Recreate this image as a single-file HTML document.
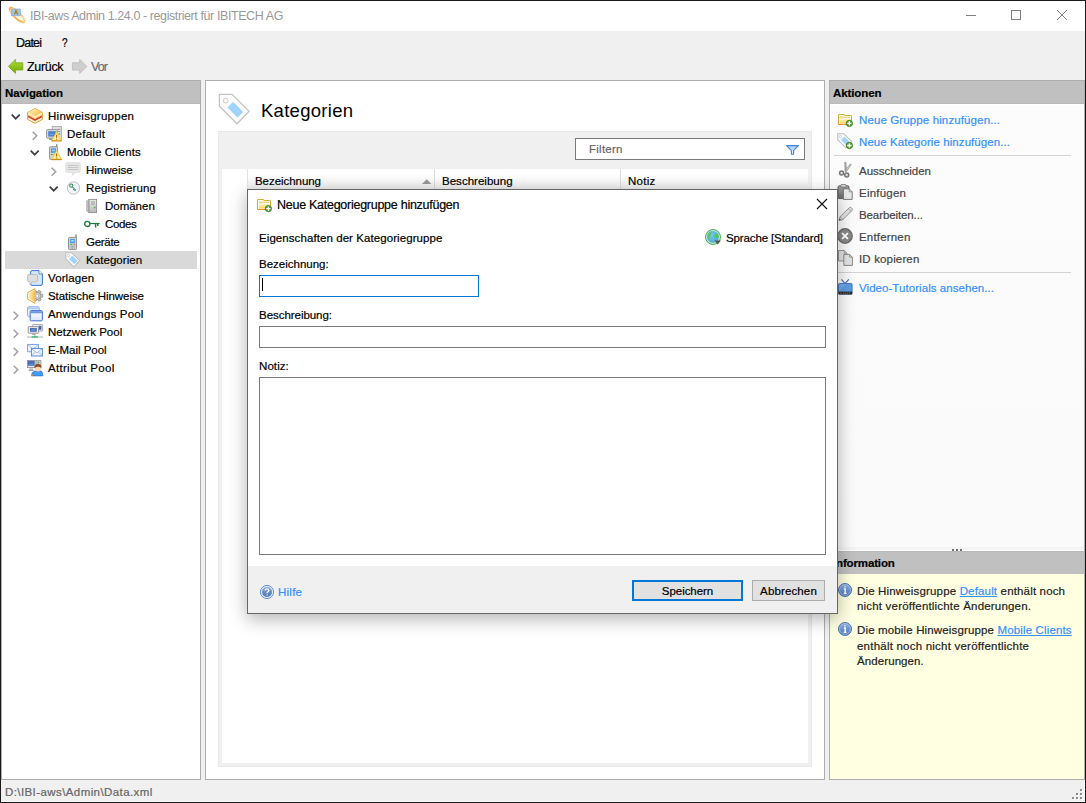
<!DOCTYPE html>
<html lang="de">
<head>
<meta charset="utf-8">
<title>IBI-aws Admin</title>
<style>
*{box-sizing:border-box;margin:0;padding:0}
html,body{width:1086px;height:803px;overflow:hidden}
body{position:relative;background:#f0f0f0;font-family:"Liberation Sans","DejaVu Sans",sans-serif;font-size:11.5px;color:#000;line-height:16px;-webkit-text-stroke:.2px}
.abs{position:absolute}
.t{position:absolute;white-space:nowrap;line-height:16px;height:16px}
svg{position:absolute;overflow:visible}
#frame{position:absolute;left:0;top:0;width:1086px;height:803px;border:1px solid #1a1a1a;pointer-events:none;z-index:50}
#titlebar{left:1px;top:1px;width:1084px;height:30px;background:#fff}
#title{left:29px;top:7px;color:#999;font-size:12.5px;-webkit-text-stroke:0}
.hdr{background:#c0c0c0;font-weight:bold;height:23px;border-bottom:1px solid #b9b9b9}
.hdr.tp{border-bottom:0;border-top:1px solid #b9b9b9}
.hdr span{position:absolute;left:3px;top:4px;line-height:16px;white-space:nowrap}
#nav{left:1px;top:80px;width:200px;height:700px;background:#fff;border:1px solid #adadad}
.row{position:absolute;height:18px;line-height:18px;white-space:nowrap}
#center{left:205px;top:80px;width:620px;height:700px;background:#fff;border:1px solid #adadad}
#right{left:829px;top:80px;width:256px;height:700px;border:1px solid #adadad;background:linear-gradient(#fcfcfc,#fafafa 66%,#fafafa)}

.act{position:absolute;left:29px;white-space:nowrap;line-height:16px;height:16px;color:#444}
.lnk{color:#3390ff}
.sep{position:absolute;left:4px;width:237px;height:1px;background:#d2d2d2}
.inf{position:absolute;left:27px;white-space:nowrap;line-height:16px;height:16px;color:#222}
.inf u{color:#3390ff}
#dialog{left:247px;top:189px;width:591px;height:425px;background:#fff;border:1px solid #666;box-shadow:0 5px 17px rgba(0,0,0,.30);z-index:10}
.inp{position:absolute;background:#fff;border:1px solid #7a7a7a}
.btn{position:absolute;background:#e1e1e1;border:1px solid #adadad;height:21px;text-align:center}
.btn span{position:absolute;left:0;right:0;top:2px;line-height:16px;text-align:center}
/*LS*/
#m1{letter-spacing:-0.797px}
#tb1{letter-spacing:-0.321px}
#tb2{letter-spacing:-0.883px}
#h1{letter-spacing:-0.089px}
#r1{letter-spacing:0.272px}
#r2{letter-spacing:0.260px}
#r3{letter-spacing:0.113px}
#r4{letter-spacing:-0.010px}
#r5{letter-spacing:0.133px}
#r6{letter-spacing:-0.013px}
#r7{letter-spacing:-0.362px}
#r8{letter-spacing:-0.294px}
#r9{letter-spacing:0.064px}
#r10{letter-spacing:0.113px}
#r11{letter-spacing:-0.068px}
#r12{letter-spacing:0.192px}
#r13{letter-spacing:0.005px}
#r14{letter-spacing:-0.021px}
#r15{letter-spacing:0.304px}
#a1{letter-spacing:0.120px}
#a2{letter-spacing:0.075px}
#a3{letter-spacing:-0.023px}
#a4{letter-spacing:0.228px}
#a5{letter-spacing:-0.102px}
#a6{letter-spacing:0.178px}
#a7{letter-spacing:0.149px}
#a8{letter-spacing:0.056px}
#n1{letter-spacing:0.162px}
#n2{letter-spacing:0.189px}
#n3{letter-spacing:0.147px}
#n4{letter-spacing:0.220px}
#n5{letter-spacing:0.092px}
#d0{letter-spacing:-0.265px}
#d1{letter-spacing:0.077px}
#d3{letter-spacing:-0.000px}
#d4{letter-spacing:-0.044px}
#d5{letter-spacing:0.079px}
#d2{letter-spacing:-0.123px}
#c1{letter-spacing:-0.050px}
#c2{letter-spacing:0.025px}
#c3{letter-spacing:0.274px}
#flt{letter-spacing:0.258px}
#title{letter-spacing:-0.409px}
#ct{letter-spacing:0.280px}
#st{letter-spacing:0.412px}
#d6{letter-spacing:0.246px}
#b1{letter-spacing:-0.050px}
#b2{letter-spacing:0.134px}
#h2{letter-spacing:-0.100px}
#h3{letter-spacing:-0.145px}
/*ENDLS*/
</style>
</head>
<body>
<div id="titlebar" class="abs">

  <svg style="left:8px;top:6px" width="16" height="16" viewBox="0 0 16 16">
    <ellipse cx="8" cy="8" rx="10.2" ry="3.2" transform="rotate(45 8 8)" fill="rgba(255,240,214,.55)" stroke="#f4b957" stroke-width="1.5" stroke-dasharray="1.3 .45"/>
    <rect x="2.6" y="2" width="8.8" height="6.8" fill="#9cbfe4" stroke="#7e9fc4" stroke-width=".6" opacity=".92"/>
    <path d="M5.4 7.4 L7 3.4 L8.6 7.4 M6 6 H8" fill="none" stroke="#9a8414" stroke-width="1.1"/>
    <path d="M1.2 3.4 Q-.2 .4 2.6 1 M5.2 9.4 Q9.8 14.2 13.6 14.8" fill="none" stroke="#f1ae45" stroke-width="1.5"/>
  </svg>
  <svg style="left:965px;top:14px" width="10" height="1"><rect width="10" height="1" fill="#808080"/></svg>
  <svg style="left:1010px;top:9px" width="10" height="10"><rect x=".5" y=".5" width="9" height="9" fill="none" stroke="#808080"/></svg>
  <svg style="left:1056px;top:9px" width="10" height="10"><path d="M0 0 L10 10 M10 0 L0 10" stroke="#808080" stroke-width="1" fill="none"/></svg>
  <div id="title" class="t">IBI-aws Admin 1.24.0 - registriert für IBITECH AG</div>
</div>
<div class="t" id="m1" style="left:16px;top:35px;font-size:12.5px">Datei</div>
<div class="t" id="m2" style="left:62px;top:35px;font-size:12.5px;transform:scaleX(.8);transform-origin:0 0">?</div>

<svg style="left:8px;top:59px" width="16" height="16" viewBox="0 0 16 16">
  <defs><linearGradient id="gG" x1="0" y1="0" x2="0" y2="1"><stop offset="0" stop-color="#b9e04a"/><stop offset=".5" stop-color="#8fc31a"/><stop offset="1" stop-color="#74a80c"/></linearGradient></defs>
  <path d="M.4 7.4 L7.4 .4 L7.4 3.8 L14.8 3.8 L14.8 11 L7.4 11 L7.4 14.4 Z" fill="url(#gG)" stroke="#7aa814" stroke-width=".8" stroke-linejoin="round"/>
</svg>
<svg style="left:72px;top:59px" width="16" height="16" viewBox="0 0 16 16">
  <path d="M14.8 7.4 L7.8 .4 L7.8 3.8 L.4 3.8 L.4 11 L7.8 11 L7.8 14.4 Z" fill="#cfcfcf" stroke="#b8b8b8" stroke-width=".8" stroke-linejoin="round"/>
</svg>
<div class="t" id="tb1" style="left:27px;top:59px;font-size:12.5px">Zurück</div>
<div class="t" id="tb2" style="left:91px;top:59px;font-size:12.5px;color:#6d6d6d">Vor</div>

<div id="nav" class="abs">
  <div class="hdr abs" style="left:0;top:0;width:198px"><span id="h1">Navigation</span></div>
  <div class="abs" style="left:3px;top:170px;width:192px;height:18px;background:#d9d9d9"></div>
<!--TREEICONS-->
<svg style="left:9px;top:33px" width="10" height="6" viewBox="0 0 10 6"><path d="M.7 .7 L4.7 4.7 L8.7 .7" fill="none" stroke="#404040" stroke-width="1.7"/></svg>
<svg style="left:30px;top:50px" width="6" height="10" viewBox="0 0 6 10"><path d="M.7 .7 L4.7 4.7 L.7 8.7" fill="none" stroke="#a3a3a3" stroke-width="1.6"/></svg>
<svg style="left:28px;top:69px" width="10" height="6" viewBox="0 0 10 6"><path d="M.7 .7 L4.7 4.7 L8.7 .7" fill="none" stroke="#404040" stroke-width="1.7"/></svg>
<svg style="left:49px;top:86px" width="6" height="10" viewBox="0 0 6 10"><path d="M.7 .7 L4.7 4.7 L.7 8.7" fill="none" stroke="#a3a3a3" stroke-width="1.6"/></svg>
<svg style="left:47px;top:105px" width="10" height="6" viewBox="0 0 10 6"><path d="M.7 .7 L4.7 4.7 L8.7 .7" fill="none" stroke="#404040" stroke-width="1.7"/></svg>
<svg style="left:11px;top:230px" width="6" height="10" viewBox="0 0 6 10"><path d="M.7 .7 L4.7 4.7 L.7 8.7" fill="none" stroke="#a3a3a3" stroke-width="1.6"/></svg>
<svg style="left:11px;top:248px" width="6" height="10" viewBox="0 0 6 10"><path d="M.7 .7 L4.7 4.7 L.7 8.7" fill="none" stroke="#a3a3a3" stroke-width="1.6"/></svg>
<svg style="left:11px;top:266px" width="6" height="10" viewBox="0 0 6 10"><path d="M.7 .7 L4.7 4.7 L.7 8.7" fill="none" stroke="#a3a3a3" stroke-width="1.6"/></svg>
<svg style="left:11px;top:284px" width="6" height="10" viewBox="0 0 6 10"><path d="M.7 .7 L4.7 4.7 L.7 8.7" fill="none" stroke="#a3a3a3" stroke-width="1.6"/></svg>
<svg style="left:25px;top:27px" width="16" height="16" viewBox="0 0 16 16">
<defs><linearGradient id="gHg" x1="0" y1="0" x2="1" y2="1"><stop offset="0" stop-color="#fff3c4"/><stop offset="1" stop-color="#f3b93a"/></linearGradient></defs>
<path d="M8 .6 L15.4 4.4 L15.4 11.4 L8 15.4 L.6 11.4 L.6 4.4 Z" fill="#fdf1cf" stroke="#dba43c" stroke-width="1" stroke-linejoin="round"/>
<path d="M8 .9 L15 4.5 L8 8.3 L1 4.5 Z" fill="url(#gHg)"/>
<path d="M1 7.2 L8 11 L15 7.2 L15 9.3 L8 13.1 L1 9.3 Z" fill="#d2402e"/>
<path d="M1 6.2 L8 10 L15 6.2 L15 7.2 L8 11 L1 7.2Z" fill="#f6c85a"/>
</svg>
<svg style="left:44px;top:45px" width="16" height="16" viewBox="0 0 16 16">
<rect x="6.2" y=".6" width="9.2" height="13" fill="#dedede" stroke="#a4a4a4" stroke-width=".8"/>
<path d="M11.6 3.4 H14.4 M11.6 5.4 H14.4" stroke="#8c8c8c" stroke-width=".9"/>
<rect x="12.6" y="7.2" width="1.6" height="1.6" fill="#55b555"/>
<rect x=".6" y="3.6" width="10.6" height="8.6" rx=".8" fill="#dadada" stroke="#8e8e8e" stroke-width=".9"/>
<rect x="2.2" y="5.2" width="7.6" height="5.4" fill="#4f80d0"/>
<path d="M3.5 8.3 H7.6" stroke="#8fb4ea" stroke-width=".7"/>
<path d="M3 13.2 H8.5" stroke="#8a8f99" stroke-width="1.4"/>
<g transform="translate(5.1,5.4)"><path d="M5.5 .7 L10.5 9.3 L.5 9.3 Z" fill="#ffe572" stroke="#f3c94a" stroke-width=".9" stroke-linejoin="round"/><path d="M5.5 2 L8.8 8.4 L2.2 8.4Z" fill="#fff3b0" opacity=".8"/><path d="M.3 9.5 H10.7" stroke="#cb8a1c" stroke-width="1.1"/><path d="M5.5 3.4 V6.4 M5.5 7.3 V8.3" stroke="#b9680e" stroke-width="1.2" fill="none"/></g></svg>
<svg style="left:44px;top:63px" width="16" height="16" viewBox="0 0 16 16">
<path d="M10.8 .2 V4" stroke="#5a5a5a" stroke-width="1"/>
<rect x="3.6" y="2.7" width="8" height="12.8" rx="1" fill="#d2d2d2" stroke="#8c8c8c" stroke-width=".9"/>
<rect x="5" y="4.4" width="5" height="4.4" fill="#3d9bf0"/>
<rect x="6" y="5.6" width="3" height="1.6" fill="#9fd2fb"/>
<rect x="5" y="10" width="2.2" height="1" fill="#4cb84c"/>
<g transform="translate(5.1,6.1)"><path d="M5.5 .7 L10.5 9.3 L.5 9.3 Z" fill="#ffe572" stroke="#f3c94a" stroke-width=".9" stroke-linejoin="round"/><path d="M5.5 2 L8.8 8.4 L2.2 8.4Z" fill="#fff3b0" opacity=".8"/><path d="M.3 9.5 H10.7" stroke="#cb8a1c" stroke-width="1.1"/><path d="M5.5 3.4 V6.4 M5.5 7.3 V8.3" stroke="#b9680e" stroke-width="1.2" fill="none"/></g></svg>
<svg style="left:63px;top:81px" width="16" height="16" viewBox="0 0 16 16">
<path d="M2 .6 H14 Q15.4 .6 15.4 2 V9 Q15.4 10.4 14 10.4 H10.6 L7.4 13.6 L7.4 10.4 H2 Q.6 10.4 .6 9 V2 Q.6 .6 2 .6Z" fill="#e6e6e6" stroke="#dadada" stroke-width=".6"/>
<path d="M2.6 3.5 H13.4 M2.6 5.5 H13.4 M2.6 7.5 H13.4" stroke="#c6c6c6" stroke-width="1"/>
</svg>
<svg style="left:63px;top:99px" width="16" height="16" viewBox="0 0 16 16">
<circle cx="8.5" cy="8" r="6.2" fill="#f3f3fa" stroke="#b9b9c2" stroke-width=".9"/>
<circle cx="6.2" cy="5.6" r="1.6" fill="none" stroke="#3d9a6c" stroke-width="1.1"/>
<path d="M7.4 6.8 L11 10.4 M9.2 8.6 L8 9.8 M10.4 9.8 L9.4 10.8" stroke="#3d9a6c" stroke-width="1.1" fill="none"/>
</svg>
<svg style="left:82px;top:117px" width="16" height="16" viewBox="0 0 16 16">
<defs><linearGradient id="gSv" x1="0" y1="0" x2="0" y2="1"><stop offset="0" stop-color="#ececec"/><stop offset="1" stop-color="#b9b9b9"/></linearGradient></defs>
<path d="M5 1.4 L2.6 3 V13 L5 14.6 Z" fill="#c4c4c4" stroke="#a2a2a2" stroke-width=".6"/>
<rect x="5" y="1.4" width="7.6" height="13.2" fill="url(#gSv)" stroke="#8f8f8f" stroke-width=".9"/>
<path d="M7 4 H11 M7 6 H11" stroke="#9a9a9a" stroke-width="1"/>
<path d="M9.2 10.2 L11.4 8 V10.2Z" fill="#35b035"/>
</svg>
<svg style="left:82px;top:135px" width="16" height="16" viewBox="0 0 16 16">
<circle cx="3.3" cy="7.9" r="2.6" fill="none" stroke="#1c7a3c" stroke-width="1.3"/>
<path d="M5.9 7.5 H15.6" stroke="#1c7a3c" stroke-width="1.2"/>
<path d="M11.6 7.5 V11.4 M13.8 7.5 V10" stroke="#1c7a3c" stroke-width="1.4"/>
</svg>
<svg style="left:63px;top:153px" width="16" height="16" viewBox="0 0 16 16">
<path d="M11 .3 V4" stroke="#5a5a5a" stroke-width="1"/>
<rect x="3.5" y="3.4" width="8" height="12.2" rx="1" fill="#d0d0d0" stroke="#888" stroke-width=".9"/>
<rect x="5.2" y="5" width="4.6" height="4.2" fill="#3d9bf0"/>
<rect x="6.1" y="6" width="2.8" height="1.6" fill="#a8d6fb"/>
<rect x="5.2" y="10" width="2" height="1" fill="#4cb84c"/>
<rect x="8.6" y="10" width="1.2" height="1" fill="#e04040"/>
<path d="M5.6 12.3 H6.6 M7.1 12.3 H8.1 M8.6 12.3 H9.6 M5.6 14 H6.6 M7.1 14 H8.1 M8.6 14 H9.6" stroke="#8a8a8a" stroke-width="1"/>
</svg>
<svg style="left:63px;top:171px" width="16" height="16" viewBox="0 0 16 16"><path d="M.7 .7 H6.6 L14.8 8.7 L8.8 14.8 L.7 6.6 Z" fill="#fbfbfb" stroke="#c0c0c0" stroke-width="1.1" stroke-linejoin="round"/>
<circle cx="3.5" cy="3.6" r="1.2" fill="#fff" stroke="#c4c4c4" stroke-width=".8"/>
<path d="M7.4 3.9 L12.3 8.8 L9 11.8 L4.4 6.9 Z" fill="#9fd4fa" stroke="#8ecbf8" stroke-width=".5"/></svg>
<svg style="left:25px;top:189px" width="16" height="16" viewBox="0 0 16 16">
<path d="M5 .6 H12 L15.4 4 V14 Q15.4 15.4 14 15.4 H5 Q3.6 15.4 3.6 14 V2 Q3.6 .6 5 .6Z" fill="#d6e7fb" stroke="#3a79d9" stroke-width="1"/>
<path d="M12 .6 V4 H15.4" fill="#f4f9ff" stroke="#3a79d9" stroke-width=".8"/>
<path d="M2 4.4 H9.2 Q10.6 4.4 10.6 5.8 V10.4 Q10.6 11.8 9.2 11.8 H5.6 L3 14.4 V11.8 H2 Q.6 11.8 .6 10.4 V5.8 Q.6 4.4 2 4.4Z" fill="#dedede" stroke="#b4b4b4" stroke-width=".8"/>
</svg>
<svg style="left:25px;top:207px" width="16" height="16" viewBox="0 0 16 16">
<defs><linearGradient id="gSt" x1="0" y1="0" x2="1" y2="0"><stop offset="0" stop-color="#fff4cf"/><stop offset=".55" stop-color="#f9d786"/><stop offset="1" stop-color="#f2b74c"/></linearGradient></defs>
<g transform="translate(10.3,7.8)"><rect x="-1.5" y="-5.5" width="3" height="2.8" rx=".4" transform="rotate(30)" fill="#cacaca" stroke="#7c7c7c" stroke-width=".6"/><rect x="-1.5" y="-5.5" width="3" height="2.8" rx=".4" transform="rotate(90)" fill="#cacaca" stroke="#7c7c7c" stroke-width=".6"/><rect x="-1.5" y="-5.5" width="3" height="2.8" rx=".4" transform="rotate(150)" fill="#cacaca" stroke="#7c7c7c" stroke-width=".6"/><rect x="-1.5" y="-5.5" width="3" height="2.8" rx=".4" transform="rotate(210)" fill="#cacaca" stroke="#7c7c7c" stroke-width=".6"/><rect x="-1.5" y="-5.5" width="3" height="2.8" rx=".4" transform="rotate(270)" fill="#cacaca" stroke="#7c7c7c" stroke-width=".6"/><rect x="-1.5" y="-5.5" width="3" height="2.8" rx=".4" transform="rotate(330)" fill="#cacaca" stroke="#7c7c7c" stroke-width=".6"/><circle r="3.5" fill="#cdcdcd" stroke="#8c8c8c" stroke-width=".6"/><circle r="1.5" fill="#fff" stroke="#9a9a9a" stroke-width=".5"/></g>
<path d="M8.3 .5 L.6 4.6 V11.2 L8.3 15.5 Z" fill="url(#gSt)"/><path d="M8.3 .5 L.6 4.6 V11.2 L8.3 15.5" fill="none" stroke="#e1b243" stroke-width="1" stroke-linejoin="round"/>
<path d="M7.3 2.2 L1.7 5.2 V10.6 L7.3 13.8" fill="none" stroke="#fff8e2" stroke-width=".8" opacity=".9"/>
</svg>
<svg style="left:25px;top:225px" width="16" height="16" viewBox="0 0 16 16">
<defs><linearGradient id="gAw" x1="0" y1="0" x2="0" y2="1"><stop offset="0" stop-color="#fff"/><stop offset="1" stop-color="#d9e6fa"/></linearGradient></defs>
<rect x=".6" y=".8" width="11.6" height="9.6" rx="1" fill="#edf3fd" stroke="#7fa3e3" stroke-width=".9"/>
<rect x="1" y="1.2" width="10.8" height="2.2" fill="#b4cbf2"/>
<rect x="3.2" y="4.6" width="12.2" height="10.2" rx="1" fill="url(#gAw)" stroke="#3f6fcd" stroke-width="1"/>
<rect x="3.7" y="5.1" width="11.2" height="2.2" fill="#6f98e0"/>
</svg>
<svg style="left:25px;top:243px" width="16" height="16" viewBox="0 0 16 16">
<rect x="5.6" y=".5" width="10" height="6.6" rx=".6" fill="#ececec" stroke="#9a9a9a" stroke-width=".8"/>
<rect x="11.6" y="1.8" width="2.8" height="4" fill="#3f69b5"/>
<rect x="1.2" y="2.6" width="10.4" height="6.6" rx=".6" fill="#ececec" stroke="#909090" stroke-width=".9"/>
<rect x="3" y="4" width="6.8" height="3.8" fill="#4a72bc"/>
<path d="M4.4 6 H8.4" stroke="#86aae6" stroke-width=".8"/>
<path d="M5 10.2 H8.6" stroke="#a4a4a4" stroke-width="1.4"/>
<path d="M0 13 H16" stroke="#c9d3d3" stroke-width="1.6"/><path d="M4.6 13 H11 M7.8 11.4 V13" stroke="#45ba7c" stroke-width="1.6"/>
</svg>
<svg style="left:25px;top:261px" width="16" height="16" viewBox="0 0 16 16">
<rect x=".6" y="2.4" width="10.8" height="7.4" fill="#edf3fd" stroke="#6d9be3" stroke-width=".9"/>
<path d="M.8 2.6 L6 7 L11.2 2.6" fill="none" stroke="#8fb3ea" stroke-width=".8"/>
<rect x="4.4" y="6.4" width="11" height="7.6" fill="#f2f7fe" stroke="#4a80d8" stroke-width=".9"/>
<path d="M4.7 6.7 L9.9 11 L15.1 6.7 M4.7 13.7 L8.4 10 M15.1 13.7 L11.4 10" fill="none" stroke="#7fa9e8" stroke-width=".8"/>
</svg>
<svg style="left:25px;top:279px" width="16" height="16" viewBox="0 0 16 16">
<rect x="9" y=".3" width="5" height="5.4" fill="#d0d0d0" stroke="#8d8d8d" stroke-width=".7"/>
<rect x="10.6" y="1.6" width="1.5" height="1.5" fill="#3fae3f"/>
<rect x=".4" y=".4" width="7.6" height="7.2" fill="#e4e6ea" stroke="#8a8e98" stroke-width=".8"/>
<rect x=".8" y=".8" width="6.8" height="5" fill="#4a70b6"/>
<path d="M1.8 4.4 H6.4" stroke="#7e9cd4" stroke-width=".7"/>
<path d="M2.2 9 H6.2 M1.6 10.4 H6.8" stroke="#a0a4ac" stroke-width="1.2"/>
<path d="M4.4 15.9 Q4.5 11.6 8 10.9 H14 Q15.8 11.6 15.9 15.9 Z" fill="#3f9ef3" stroke="#2f62c4" stroke-width=".6"/>
<circle cx="11" cy="8.6" r="3" fill="#f9d9b8"/>
<path d="M7.5 8.4 Q7 4 11 3.7 Q15 4 14.5 8.4 Q13 6.3 11 6.7 Q9 6.3 7.5 8.4Z" fill="#8a4f22"/>
<rect x="4.4" y="14.4" width="1.4" height="1.5" fill="#f0963a"/>
</svg>
<!--/TREEICONS-->
  <div class="row" id="r1" style="left:46px;top:26px">Hinweisgruppen</div>
  <div class="row" id="r2" style="left:65px;top:44px">Default</div>
  <div class="row" id="r3" style="left:65px;top:62px">Mobile Clients</div>
  <div class="row" id="r4" style="left:84px;top:80px">Hinweise</div>
  <div class="row" id="r5" style="left:84px;top:98px">Registrierung</div>
  <div class="row" id="r6" style="left:103px;top:116px">Domänen</div>
  <div class="row" id="r7" style="left:103px;top:134px">Codes</div>
  <div class="row" id="r8" style="left:84px;top:152px">Geräte</div>
  <div class="row" id="r9" style="left:84px;top:170px">Kategorien</div>
  <div class="row" id="r10" style="left:46px;top:188px">Vorlagen</div>
  <div class="row" id="r11" style="left:46px;top:206px">Statische Hinweise</div>
  <div class="row" id="r12" style="left:46px;top:224px">Anwendungs Pool</div>
  <div class="row" id="r13" style="left:46px;top:242px">Netzwerk Pool</div>
  <div class="row" id="r14" style="left:46px;top:260px">E-Mail Pool</div>
  <div class="row" id="r15" style="left:46px;top:278px">Attribut Pool</div>
</div>

<div id="center" class="abs">
  <svg style="left:12px;top:12px" width="32" height="32" viewBox="0 0 32 32">
    <path d="M1.4 1.4 H14.1 L31 18.3 L19 30.7 L1.4 13.3 Z" fill="#fcfcfc" stroke="#c3c3c3" stroke-width="1.3" stroke-linejoin="round"/>
    <circle cx="7.7" cy="7.6" r="2.4" fill="#fff" stroke="#c9c9c9" stroke-width="1"/>
    <path d="M15.2 9.4 L24.6 19 L19.5 24 L10 14.4 Z" fill="#9fd4fa" stroke="#8fcbf8" stroke-width=".8" stroke-linejoin="round"/>
  </svg>
  <div class="t" id="ct" style="left:55px;top:18px;font-size:18.5px;-webkit-text-stroke:0;line-height:24px;height:24px">Kategorien</div>
  <div class="abs" style="left:12px;top:50px;width:594px;height:636px;background:#f0f0f0;border:1px solid #e8e8e8"></div>
  <div class="abs" style="left:16px;top:88px;width:586px;height:594px;background:#fff"></div>
  <div class="abs" style="left:42px;top:88px;width:560px;height:21px;background:linear-gradient(#fff,#fdfdfd 40%,#ececec)"></div>
  <div class="abs" style="left:41px;top:88px;width:1px;height:21px;background:#e2e2e2"></div>
  <div class="abs" style="left:228px;top:88px;width:1px;height:21px;background:#dadada"></div>
  <div class="abs" style="left:414px;top:88px;width:1px;height:21px;background:#dadada"></div>
  <svg style="left:216px;top:98px" width="10" height="5" viewBox="0 0 10 5"><path d="M0 5 L4.7 .2 L9.4 5Z" fill="#979797"/></svg>
  <div class="inp" style="left:369px;top:57px;width:230px;height:22px"></div>
  <svg style="left:580px;top:64px" width="13" height="10" viewBox="0 0 13 10">
    <defs><linearGradient id="gFu" x1="0" y1="0" x2="0" y2="1"><stop offset="0" stop-color="#a8cdf6"/><stop offset="1" stop-color="#eaf3fd"/></linearGradient></defs>
    <path d="M.6 .6 H12.4 L7.6 5.6 V9.2 H5.4 V5.6 Z" fill="url(#gFu)" stroke="#3f86e0" stroke-width="1.1" stroke-linejoin="round"/>
  </svg>
  <div class="t" id="flt" style="left:383px;top:60px;color:#666">Filtern</div>
  <div class="t" id="c1" style="left:49px;top:92px">Bezeichnung</div>
  <div class="t" id="c2" style="left:236px;top:92px">Beschreibung</div>
  <div class="t" id="c3" style="left:422px;top:92px">Notiz</div>
</div>

<div id="right" class="abs">
  <div class="hdr abs" style="left:0;top:0;width:254px"><span id="h2">Aktionen</span></div>
  <div class="abs" style="left:0;top:23px;width:254px;height:1px;background:#fff"></div><div class="abs" style="left:0;top:23px;width:1px;height:443px;background:#fff"></div>
  <div class="act lnk" id="a1" style="top:31px">Neue Gruppe hinzufügen...</div>
  <div class="act lnk" id="a2" style="top:53px">Neue Kategorie hinzufügen...</div>
  <div class="sep" style="top:74px"></div>
  <div class="act" id="a3" style="top:82px">Ausschneiden</div>
  <div class="act" id="a4" style="top:104px">Einfügen</div>
  <div class="act" id="a5" style="top:126px">Bearbeiten...</div>
  <div class="act" id="a6" style="top:148px">Entfernen</div>
  <div class="act" id="a7" style="top:170px">ID kopieren</div>
  <div class="sep" style="top:191px"></div>
  <div class="act lnk" id="a8" style="top:199px">Video-Tutorials ansehen...</div>
  <div class="abs" style="left:0;top:466px;width:254px;height:3px;background:#f4f4f4"></div><div class="abs" style="left:0;top:469px;width:254px;height:1px;background:#fff"></div>
  <div class="abs" style="left:122px;top:468px;width:2px;height:2px;background:#6e6e6e"></div><div class="abs" style="left:126px;top:468px;width:2px;height:2px;background:#6e6e6e"></div><div class="abs" style="left:130px;top:468px;width:2px;height:2px;background:#6e6e6e"></div>
  <div class="hdr tp abs" style="left:0;top:470px;width:254px"><span id="h3" style="top:3px">Information</span></div>
  <div class="abs" style="left:0;top:493px;width:254px;height:205px;background:#ffffe1"></div>
<!--RIGHTICONS-->
<svg style="left:8px;top:31px" width="16" height="16" viewBox="0 0 16 16"><defs><linearGradient id="gFoa" x1="0" y1="0" x2="0" y2="1"><stop offset="0" stop-color="#fcf2c4"/><stop offset="1" stop-color="#f9d655"/></linearGradient><linearGradient id="gFba" x1="0" y1="0" x2="0" y2="1"><stop offset="0" stop-color="#d9b23c"/><stop offset=".6" stop-color="#e0a436"/><stop offset="1" stop-color="#ea8e2c"/></linearGradient></defs>
<path d="M.5 2.5 H6.8 V3.5 H13.5 V12.5 H.5 Z" fill="#fffdf4" stroke="url(#gFba)" stroke-width="1" stroke-linejoin="round"/>
<path d="M2 4.2 H5 L5.8 4.8 H12 V6 H5.8 L5 6.6 H2Z" fill="#f3d985"/>
<path d="M2 7.6 H5.6 L6.4 7 H12 V11.4 H2Z" fill="url(#gFoa)"/><g transform="translate(11.4,11.4)"><circle r="3.15" fill="#58a536" stroke="#37791a" stroke-width=".8"/><path d="M-2.1 0 H2.1 M0 -2.1 V2.1" stroke="#fff" stroke-width="1.4"/></g></svg>
<svg style="left:7px;top:52px" width="16" height="16" viewBox="0 0 16 16"><path d="M.7 .7 H6.6 L14.8 8.7 L8.8 14.8 L.7 6.6 Z" fill="#fbfbfb" stroke="#c0c0c0" stroke-width="1.1" stroke-linejoin="round"/>
<circle cx="3.5" cy="3.6" r="1.2" fill="#fff" stroke="#c4c4c4" stroke-width=".8"/>
<path d="M7.4 3.9 L12.3 8.8 L9 11.8 L4.4 6.9 Z" fill="#9fd4fa" stroke="#8ecbf8" stroke-width=".5"/><g transform="translate(12.4,12.5)"><circle r="3.15" fill="#58a536" stroke="#37791a" stroke-width=".8"/><path d="M-2.1 0 H2.1 M0 -2.1 V2.1" stroke="#fff" stroke-width="1.4"/></g></svg>
<svg style="left:8px;top:81px" width="16" height="16" viewBox="0 0 16 16">
<path d="M6.7 .3 L8 .5 L8.5 9.4 L7 9.6 Z" fill="#b0b0b0" stroke="#8a8a8a" stroke-width=".6" stroke-linejoin="round"/>
<path d="M12.3 1.7 L13.3 2.7 L8.8 9.2 L7.4 8.2 Z" fill="#c8c8c8" stroke="#8a8a8a" stroke-width=".6" stroke-linejoin="round"/>
<circle cx="3.6" cy="10.9" r="2" fill="#dcdcdc" stroke="#777" stroke-width="1.5"/>
<circle cx="8.7" cy="12.9" r="2" fill="#dcdcdc" stroke="#777" stroke-width="1.5"/>
</svg>
<svg style="left:7px;top:103px" width="16" height="16" viewBox="0 0 16 16">
<defs><linearGradient id="gPa" x1="0" y1="0" x2="0" y2="1"><stop offset="0" stop-color="#a2a2a2"/><stop offset="1" stop-color="#6c6c6c"/></linearGradient></defs>
<rect x="1" y="1.8" width="11" height="12.8" rx="1.2" fill="url(#gPa)" stroke="#5a5a5a" stroke-width=".9"/>
<rect x="3.8" y=".5" width="5.4" height="2.6" rx=".8" fill="#d4d4d4" stroke="#6a6a6a" stroke-width=".7"/>
<path d="M6.4 4.8 H12.2 L15.2 7.8 V15.4 H6.4 Z" fill="#ebebeb" stroke="#6e6e6e" stroke-width=".9" stroke-linejoin="round"/>
<path d="M12.2 4.8 V7.8 H15.2" fill="none" stroke="#7b7b7b" stroke-width=".7"/>
</svg>
<svg style="left:8px;top:125px" width="16" height="16" viewBox="0 0 16 16">
<path d="M1 14.6 L2 10.8 L11.4 1.6 Q12.4 .8 13.4 1.8 L14.2 2.6 Q15 3.6 14.2 4.4 L4.8 13.6 Z" fill="#e3e3e3" stroke="#8d8d8d" stroke-width=".9" stroke-linejoin="round"/>
<path d="M2 10.8 L4.8 13.6 M10.4 2.6 L13.2 5.4" stroke="#8d8d8d" stroke-width=".7" fill="none"/>
<path d="M1 14.6 L1.5 12.6 L3 14.1Z" fill="#555"/>
</svg>
<svg style="left:7px;top:147px" width="16" height="16" viewBox="0 0 16 16">
<circle cx="8" cy="8" r="7.2" fill="#8a8a8a" stroke="#6b6b6b" stroke-width="1.4"/>
<path d="M5.6 5.6 L10.4 10.4 M10.4 5.6 L5.6 10.4" stroke="#fff" stroke-width="1.9" stroke-linecap="round"/>
</svg>
<svg style="left:8px;top:169px" width="16" height="16" viewBox="0 0 16 16">
<path d="M.5 .5 H6.2 L9 3.3 V11 H.5 Z" fill="#e4e4e4" stroke="#8a8a8a" stroke-width=".9" stroke-linejoin="round"/>
<path d="M6.2 .5 V3.3 H9" fill="none" stroke="#8a8a8a" stroke-width=".7"/>
<path d="M5.8 4.4 H11.6 L14.4 7.2 V15.4 H5.8 Z" fill="#e4e4e4" stroke="#808080" stroke-width=".9" stroke-linejoin="round"/>
<path d="M11.6 4.4 V7.2 H14.4" fill="none" stroke="#808080" stroke-width=".7"/>
</svg>
<svg style="left:8px;top:198px" width="16" height="16" viewBox="0 0 16 16">
<path d="M3.4 .4 L7 4.6 L10.8 .4" fill="none" stroke="#3a6ab0" stroke-width="1.1"/>
<rect x=".5" y="4.6" width="13.6" height="10.6" rx=".8" fill="#5b9ee6" stroke="#3a6eb8" stroke-width=".9"/>
<path d="M1 5 L9 5 L1 12Z" fill="#7cb4ee" opacity=".7"/>
<rect x=".5" y="12.6" width="13.6" height="2.8" fill="#2c2c2c"/>
<rect x="2" y="13.6" width="1.6" height="1" fill="#e03030"/>
<path d="M5 14.1 H12.6" stroke="#888" stroke-width=".8" stroke-dasharray="1.2 .8"/>
</svg>
<svg style="left:8px;top:502px" width="14" height="14" viewBox="0 0 14 14"><defs><linearGradient id="gIna" x1="0" y1="0" x2="0" y2="1"><stop offset="0" stop-color="#8fb2e0"/><stop offset="1" stop-color="#4a78bc"/></linearGradient></defs>
<circle cx="7" cy="7" r="6.5" fill="url(#gIna)" stroke="#3f68a8" stroke-width=".9"/>
<circle cx="7" cy="7" r="5.4" fill="none" stroke="#c3d6f0" stroke-width=".7" opacity=".8"/>
<path d="M7 3.2 V4.6 M5.8 6 H7.2 V10.2 M5.6 10.4 H8.6" stroke="#fff" stroke-width="1.4" fill="none"/></svg>
<svg style="left:8px;top:541px" width="14" height="14" viewBox="0 0 14 14"><defs><linearGradient id="gInb" x1="0" y1="0" x2="0" y2="1"><stop offset="0" stop-color="#8fb2e0"/><stop offset="1" stop-color="#4a78bc"/></linearGradient></defs>
<circle cx="7" cy="7" r="6.5" fill="url(#gInb)" stroke="#3f68a8" stroke-width=".9"/>
<circle cx="7" cy="7" r="5.4" fill="none" stroke="#c3d6f0" stroke-width=".7" opacity=".8"/>
<path d="M7 3.2 V4.6 M5.8 6 H7.2 V10.2 M5.6 10.4 H8.6" stroke="#fff" stroke-width="1.4" fill="none"/></svg>
<!--/RIGHTICONS-->
  <div class="inf" id="n1" style="top:502px">Die Hinweisgruppe <u>Default</u> enthält noch</div>
  <div class="inf" id="n2" style="top:517px">nicht veröffentlichte Änderungen.</div>
  <div class="inf" id="n3" style="top:541px">Die mobile Hinweisgruppe <u>Mobile Clients</u></div>
  <div class="inf" id="n4" style="top:557px">enthält noch nicht veröffentlichte</div>
  <div class="inf" id="n5" style="top:572px">Änderungen.</div>
</div>

<svg style="left:1072px;top:789px" width="12" height="12" viewBox="0 0 12 12"><rect x="9" y="1" width="2" height="2" fill="#fff"/><rect x="5" y="5" width="2" height="2" fill="#fff"/><rect x="9" y="5" width="2" height="2" fill="#fff"/><rect x="1" y="9" width="2" height="2" fill="#fff"/><rect x="5" y="9" width="2" height="2" fill="#fff"/><rect x="9" y="9" width="2" height="2" fill="#fff"/><rect x="8" y="0" width="2" height="2" fill="#8c8c8c"/><rect x="4" y="4" width="2" height="2" fill="#8c8c8c"/><rect x="8" y="4" width="2" height="2" fill="#8c8c8c"/><rect x="0" y="8" width="2" height="2" fill="#8c8c8c"/><rect x="4" y="8" width="2" height="2" fill="#8c8c8c"/><rect x="8" y="8" width="2" height="2" fill="#8c8c8c"/></svg>
<div class="abs" style="left:1px;top:801px;width:1084px;height:1px;background:#fbfbfb"></div><div class="abs" style="left:1084px;top:780px;width:1px;height:22px;background:#fbfbfb"></div>
<div class="t" id="st" style="left:5px;top:784px;color:#666">D:\IBI-aws\Admin\Data.xml</div>

<div id="dialog" class="abs">
  <div class="abs" style="left:0;top:376px;width:589px;height:47px;background:#f0f0f0"></div>
<!--DLGICONS-->
<svg style="left:9px;top:7px" width="16" height="16" viewBox="0 0 16 16"><defs><linearGradient id="gFob" x1="0" y1="0" x2="0" y2="1"><stop offset="0" stop-color="#fcf2c4"/><stop offset="1" stop-color="#f9d655"/></linearGradient><linearGradient id="gFbb" x1="0" y1="0" x2="0" y2="1"><stop offset="0" stop-color="#d9b23c"/><stop offset=".6" stop-color="#e0a436"/><stop offset="1" stop-color="#ea8e2c"/></linearGradient></defs>
<path d="M.5 2.5 H6.8 V3.5 H13.5 V12.5 H.5 Z" fill="#fffdf4" stroke="url(#gFbb)" stroke-width="1" stroke-linejoin="round"/>
<path d="M2 4.2 H5 L5.8 4.8 H12 V6 H5.8 L5 6.6 H2Z" fill="#f3d985"/>
<path d="M2 7.6 H5.6 L6.4 7 H12 V11.4 H2Z" fill="url(#gFob)"/><g transform="translate(11.4,11.6)"><circle r="3.15" fill="#58a536" stroke="#37791a" stroke-width=".8"/><path d="M-2.1 0 H2.1 M0 -2.1 V2.1" stroke="#fff" stroke-width="1.4"/></g></svg>
<svg style="left:457px;top:39px" width="16" height="16" viewBox="0 0 16 16">
<defs><radialGradient id="gGl" cx=".45" cy=".4" r=".6"><stop offset="0" stop-color="#7cc4ee"/><stop offset=".7" stop-color="#56aede"/><stop offset="1" stop-color="#6fd071"/></radialGradient></defs>
<circle cx="8" cy="8" r="7.5" fill="url(#gGl)" stroke="#4db852" stroke-width="1"/>
<circle cx="8" cy="8" r="6.4" fill="none" stroke="#e6f9de" stroke-width=".9" opacity=".9"/>
<path d="M2.6 6 Q3.6 2.4 7 2 Q6 4.4 5.4 6.4 Q4.6 9.4 3.4 10.8 Q2.2 8.6 2.6 6Z M8.6 6.4 Q10 4.2 12.4 4.4 Q14 6 13.6 8.4 Q11.4 9.4 9 8.6 Q8 7.6 8.6 6.4Z" fill="#4fc95a" opacity=".9"/>
<path d="M9.4 11.4 H16 L12.7 15.6Z" fill="#555"/>
</svg>
<svg style="left:12px;top:395px" width="14" height="14" viewBox="0 0 14 14">
<defs><linearGradient id="gHe" x1="0" y1="0" x2="0" y2="1"><stop offset="0" stop-color="#86a9d6"/><stop offset="1" stop-color="#4674b4"/></linearGradient></defs>
<circle cx="7" cy="7" r="6.6" fill="#dfe9f7" stroke="#5a86c4" stroke-width=".9"/>
<circle cx="7" cy="7" r="5" fill="url(#gHe)"/>
<path d="M5.2 5.6 Q5.2 3.8 7 3.8 Q8.8 3.8 8.8 5.4 Q8.8 6.4 7.6 7 Q7 7.4 7 8.2" fill="none" stroke="#fff" stroke-width="1.3"/>
<path d="M7 9.4 V10.6" stroke="#fff" stroke-width="1.4"/>
</svg>
<svg style="left:569px;top:9px" width="10" height="10" viewBox="0 0 10 10"><path d="M0 0 L10 10 M10 0 L0 10" stroke="#111" stroke-width="1.1" fill="none"/></svg>
<!--/DLGICONS-->
  <div class="t" id="d0" style="left:29px;top:7px;font-size:12.5px">Neue Kategoriegruppe hinzufügen</div>
  <div class="t" id="d1" style="left:11px;top:40px">Eigenschaften der Kategoriegruppe</div>
  <div class="t" id="d2" style="left:478px;top:40px">Sprache [Standard]</div>
  <div class="t" id="d3" style="left:11px;top:66px">Bezeichnung:</div>
  <div class="inp" style="left:11px;top:85px;width:220px;height:22px;border-color:#0078d7"></div>
  <div class="abs" style="left:14px;top:88px;width:1px;height:13px;background:#000"></div>
  <div class="t" id="d4" style="left:11px;top:117px">Beschreibung:</div>
  <div class="inp" style="left:11px;top:136px;width:567px;height:22px"></div>
  <div class="t" id="d5" style="left:11px;top:168px">Notiz:</div>
  <div class="inp" style="left:11px;top:187px;width:567px;height:178px"></div>
  <div class="t lnk" id="d6" style="left:30px;top:394px">Hilfe</div>
  <div class="btn" style="left:384px;top:390px;width:111px;border:2px solid #0078d7"><span id="b1" style="top:1px">Speichern</span></div>
  <div class="btn" style="left:504px;top:390px;width:73px"><span id="b2">Abbrechen</span></div>
</div>

<div id="frame"></div>
</body>
</html>
